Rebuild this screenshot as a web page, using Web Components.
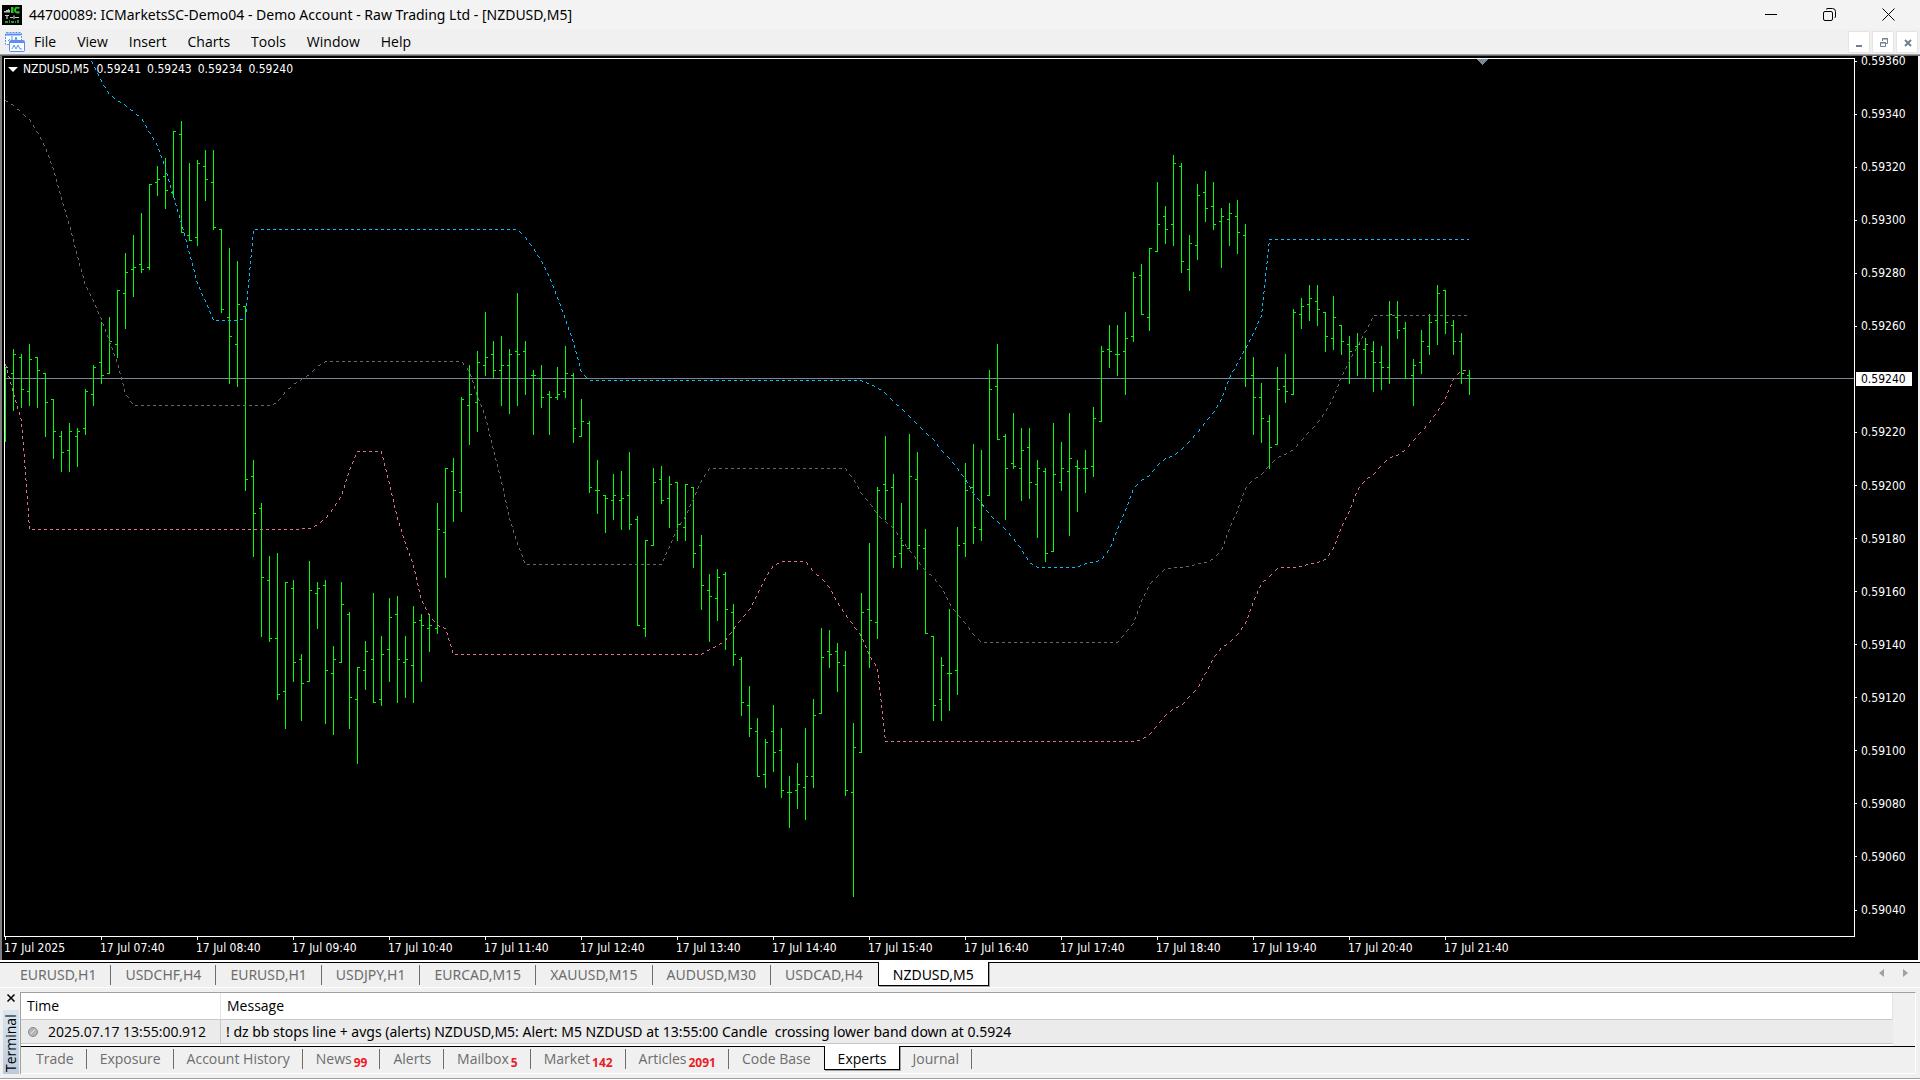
<!DOCTYPE html>
<html lang="en">
<head>
<meta charset="utf-8">
<title>Trading terminal</title>
<style>
  html, body { margin: 0; height: 100%; }
  body { background: #f0f0f0; font: 14px/20px "Open Sans", "Noto Sans", sans-serif; color: #000; overflow: hidden; }
</style>
</head>
<body>
<trading-app></trading-app>
<script>
const define = (name, html, setup) => {
  const tpl = document.createElement('template');
  tpl.innerHTML = html;
  customElements.define(name, class extends HTMLElement {
    constructor() {
      super();
      this.attachShadow({ mode: 'open' }).append(tpl.content.cloneNode(true));
    }
    connectedCallback() { if (setup) setup(this.shadowRoot, this); }
  });
};

define('title-bar', `
<style>
  :host { display: flex; align-items: center; height: 29px; padding: 0 25px 0 2px; background: #f3f3f3; box-sizing: border-box; }
  .logo { width: 20px; height: 20px; margin-right: 7px; flex: none; }
  h1 { flex: 1; margin: 0; font: 14px/20px "Noto Sans", "Open Sans", sans-serif; white-space: pre; }
  nav { display: flex; gap: 46px; }
  button { all: unset; width: 13px; height: 13px; display: block; }
  button svg { display: block; }
</style>
<svg class="logo" viewBox="0 0 20 20" aria-hidden="true">
  <rect width="20" height="20" fill="#000"/>
  <path d="M2 7.500V6h2V5h2V4h1v1h1v2.500z" fill="#b9c4b9"/>
  <path d="M9 2h2.500v6H9z" fill="#27c427"/>
  <path d="M17.500 3.200c-3.200-1.400-4.500 0-4.500 1.900s1.500 3.100 4.500 1.900" fill="none" stroke="#27c427" stroke-width="2"/>
  <path d="M3 10.500h4M5 10.500v3.500M8 12.500h3M12 10.500v3.500M13 12.500h4" stroke="#c9cfc9" stroke-width="1.200"/>
  <path d="M3 16h3v2H3zM7 15h1v3H7zM9 16h3v2H9zM13 16h1v2h-1zM15 15h2v3h-2z" fill="#1f9d2a"/>
</svg>
<h1>44700089: ICMarketsSC-Demo04 - Demo Account - Raw Trading Ltd - [NZDUSD,M5]</h1>
<nav>
  <button aria-label="Minimize"><svg width="13" height="13"><path d="M1 6.500h12" stroke="#000"/></svg></button>
  <button aria-label="Restore"><svg width="13" height="13" fill="none" stroke="#000"><rect x=".5" y="3.500" width="9" height="9" rx="1.500"/><path d="M3 1.500C3.500.8 4 .5 5 .5h4.500a3 3 0 0 1 3 3V8c0 1-.3 1.500-1 2"/></svg></button>
  <button aria-label="Close"><svg width="13" height="13"><path d="M.5.5l12 12M12.500.5l-12 12" stroke="#000"/></svg></button>
</nav>`);

define('menu-bar', `
<style>
  :host { display: flex; align-items: center; height: 25px; padding: 0 2px 0 5px; background: #f0f0f0; box-sizing: border-box; }
  .icon { width: 20px; height: 20px; flex: none; margin-right: 9px; }
  menu { flex: 1; display: flex; gap: 21px; margin: 0; padding: 0; list-style: none; }
  button { all: unset; white-space: nowrap; }
  .mdi { display: flex; gap: 2px; }
  .mdi button { width: 20px; height: 20px; background: #fff; border: 1px solid #e4e4e4; border-radius: 1px; }
  .mdi svg { display: block; }
</style>
<svg class="icon" viewBox="0 0 20 20" aria-hidden="true" fill="#fff" stroke="#5b8def">
  <path d="M1.500.5h14a1 1 0 0 1 1 1v11h-16v-11a1 1 0 0 1 1-1z" stroke-dasharray="2 1"/>
  <path d="M1 2.500h15" stroke-width="2"/>
  <path d="M3 9l2-2M7 8V4M10 8l1-3 1 3" fill="none"/>
  <rect x="4.500" y="8.500" width="15" height="11" rx="1"/>
  <path d="M5 10h14" stroke-width="2"/>
  <path d="M7 17l2-4 2 4 2-4 2 4h2" fill="none"/>
</svg>
<menu>
  <li><button>File</button></li><li><button>View</button></li><li><button>Insert</button></li>
  <li><button>Charts</button></li><li><button>Tools</button></li><li><button>Window</button></li><li><button>Help</button></li>
</menu>
<div class="mdi">
  <button aria-label="Minimize chart"><svg width="20" height="20"><path d="M7 13h6v2H7z" fill="#708090"/></svg></button>
  <button aria-label="Restore chart"><svg width="20" height="20" fill="none" stroke="#708090"><path d="M9.500 9V6.500h5v5H13M9 7h6"/><path d="M7.500 10.500h5v4h-5zM7 11h6"/></svg></button>
  <button aria-label="Close chart"><svg width="20" height="20"><path d="M8 8l6 6M14 8l-6 6" stroke="#708090" stroke-width="2"/></svg></button>
</div>`);

/* Bars, eight pixels apart: [high, low, open, close] */
const BARS = [
[367,442,367,367],[349,411,373,354],[354,408,357,389],[344,406,391,359],[357,408,357,370],[373,437,373,402],[399,459,399,431],[431,472,436,452],
[423,472,450,431],[428,467,436,431],[389,435,428,391],[365,406,394,367],[322,384,362,375],[317,374,373,341],[290,358,344,290],[253,329,293,272],
[235,297,269,267],[213,273,264,269],[184,270,267,184],[166,196,182,179],[158,209,176,190],[131,198,192,131],[121,233,134,232],[163,241,235,240],
[160,246,237,163],[150,201,166,179],[150,230,182,227],[229,313,229,309],[248,384,317,336],[261,387,344,304],[306,491,306,479],[460,557,476,513],
[503,637,508,577],[556,642,580,638],[553,700,638,694],[582,729,691,582],[580,682,588,662],[654,721,659,683],[561,682,681,590],[582,629,593,588],
[580,724,585,670],[646,735,673,659],[582,663,662,604],[612,729,614,697],[667,764,699,667],[641,690,670,651],[593,703,659,702],[636,706,699,654],
[598,682,649,617],[596,703,614,659],[636,698,662,659],[606,703,665,622],[614,682,620,625],[614,652,628,625],[503,634,628,529],[468,578,532,468],
[458,522,471,490],[397,512,492,399],[365,445,405,394],[351,432,402,362],[312,376,365,357],[341,379,354,370],[336,406,370,365],[349,414,365,354],
[293,406,351,354],[341,395,351,378],[370,435,375,375],[365,408,378,397],[391,435,394,397],[367,400,397,394],[346,398,391,373],[373,443,375,428],
[399,437,436,421],[421,493,423,487],[460,514,490,490],[495,533,495,498],[474,520,500,495],[471,530,500,498],[452,530,495,524],[516,626,519,625],
[540,637,628,540],[468,546,545,482],[466,504,479,500],[476,528,498,484],[482,541,482,524],[484,541,527,484],[487,568,487,553],[535,610,545,585],
[574,642,590,596],[569,621,598,577],[572,650,574,609],[604,666,612,654],[657,716,659,702],[686,737,705,728],[718,777,731,776],[739,788,774,742],
[705,772,731,752],[728,798,750,790],[776,828,792,792],[763,809,790,784],[728,820,787,776],[699,788,776,715],[628,714,713,657],[630,668,651,654],
[643,692,651,662],[651,796,665,790],[723,897,792,747],[593,753,752,612],[543,668,609,620],[487,639,622,490],[436,520,484,490],[474,568,487,556],
[503,568,553,545],[434,549,548,476],[452,570,479,545],[529,634,548,633],[636,721,636,705],[657,721,699,665],[609,711,673,673],[527,695,670,545],
[463,557,543,490],[444,544,487,527],[450,541,529,505],[370,496,495,389],[344,440,386,439],[434,520,436,468],[413,469,463,466],[428,501,468,450],
[428,499,447,482],[460,538,484,468],[468,562,471,553],[423,552,551,474],[442,491,482,468],[413,536,471,458],[460,512,466,468],[450,493,468,468],
[407,477,466,418],[346,422,421,351],[325,368,349,351],[325,376,354,354],[312,395,351,338],[272,342,336,277],[264,315,275,314],[248,331,317,248],
[182,252,251,224],[206,244,216,229],[155,246,224,163],[163,273,166,261],[235,291,269,243],[184,260,245,195],[171,222,192,208],[182,230,206,224],
[208,268,221,216],[203,246,219,213],[200,254,216,232],[224,387,235,378],[357,435,375,397],[383,443,397,418],[415,469,421,447],[367,445,444,389],
[354,403,386,391],[309,395,394,312],[298,329,314,306],[285,321,304,298],[285,326,301,309],[312,352,312,336],[296,350,338,317],[325,355,325,341],
[336,384,344,351],[333,376,346,344],[338,379,349,344],[341,392,351,362],[346,390,362,367],[301,384,367,314],[301,339,317,330],[322,379,328,378],
[359,406,375,365],[330,374,362,341],[314,355,346,322],[285,345,320,293],[290,334,290,322],[320,355,325,341],[333,384,341,373],[370,395,375,378]];

/* Band lines as x y pairs, drawn with a 3 on / 3 off dotted pen */
const BANDS = [
['#696969', '5 100 13 105 21 112 29 119 37 132 45 147 53 169 61 198 69 225 77 256 85 285 93 301 101 319 109 341 117 363 125 393 133 405 269 405 277 402 285 391 293 384 301 379 309 374 317 366 325 361 461 361 469 371 477 396 485 416 493 450 501 481 509 518 517 543 525 564 661 564 669 546 677 528 685 516 693 498 701 480 709 468 845 468 853 479 861 493 869 502 877 514 885 521 893 528 901 539 909 550 917 560 925 570 933 577 941 587 949 603 957 614 965 623 973 634 981 642 1117 642 1125 632 1133 623 1141 601 1149 584 1157 576 1165 568 1181 567 1189 566 1197 563 1207 562 1213 558 1221 550 1229 528 1237 510 1245 488 1253 479 1261 474 1269 465 1277 457 1285 454 1293 449 1301 440 1309 431 1319 420 1325 411 1333 397 1341 376 1349 360 1357 346 1365 331 1373 315 1469 315'],
['#db7093', '5 364 13 393 21 420 25 473 29 529 293 529 309 528 317 524 325 518 333 508 341 495 349 470 357 451 381 451 389 484 397 518 405 543 413 565 421 600 429 615 437 625 445 628 453 654 701 654 709 649 717 645 725 640 733 629 741 618 749 609 757 593 765 577 773 565 781 561 805 561 813 571 821 578 829 587 837 602 845 614 853 625 861 636 869 655 877 668 885 741 1133 741 1141 739 1149 734 1157 725 1165 715 1173 708 1181 705 1189 696 1197 688 1205 673 1213 658 1221 647 1229 642 1237 634 1245 623 1253 601 1261 583 1269 576 1277 568 1281 567 1293 567 1301 566 1309 563 1317 562 1325 559 1333 548 1341 526 1349 510 1357 490 1365 479 1373 474 1381 465 1389 457 1397 455 1405 449 1413 440 1421 431 1429 422 1437 411 1445 398 1453 378 1461 370 1469 370'],
['#00bfff', '91 61 93 64 101 81 109 94 117 100 125 105 133 111 141 118 149 132 157 145 165 168 173 196 181 223 189 253 197 283 205 301 213 320 237 320 245 318 253 229 517 229 525 237 533 248 541 261 549 277 557 297 565 319 573 342 581 372 589 380 861 380 865 382 877 387 885 393 893 401 901 408 909 416 917 424 925 432 933 439 941 450 949 458 957 468 965 479 973 493 981 503 989 514 997 521 1005 529 1013 538 1021 549 1029 562 1037 567 1073 567 1078 566 1086 563 1093 562 1101 559 1109 549 1117 529 1125 510 1133 488 1141 480 1149 475 1157 465 1165 458 1173 455 1181 449 1189 441 1197 432 1205 422 1213 412 1221 399 1229 377 1237 363 1245 348 1253 333 1261 315 1269 239 1469 239']];

/* Pixel-stepped dotted polyline */
const dotted = list => {
  const v = list.split(' ').map(Number);
  let d = '', n = 0;
  for (let i = 2; i < v.length; i += 2) {
    const dx = v[i] - v[i - 2], dy = v[i + 1] - v[i - 1];
    const steps = Math.max(Math.abs(dx), Math.abs(dy));
    for (let s = 0; s < steps; s++, n++) {
      if (n % 6 < 3) d += `M${Math.round(v[i - 2] + dx * s / steps)} ${Math.round(v[i - 1] + dy * s / steps)}h1v1h-1z`;
    }
  }
  return d;
};

define('price-chart', `
<style>
  :host { display: grid; grid-template: minmax(0, 1fr) 23px / minmax(0, 1fr) 63px; padding: 0 0 0 2px; background: #000; color: #fff;
    font: 12px/12px "DejaVu Sans Condensed", "DejaVu Sans", sans-serif; border-left: 2px solid #808080; border-right: 2px solid #f0f0f0; box-sizing: border-box; }
  .plot { position: relative; margin-top: 2px; border: 1px solid #fff; overflow: hidden; }
  .plot svg { display: block; width: 100%; height: 100%; }
  .caption { position: absolute; left: 3px; top: 4px; display: flex; align-items: center; gap: 5px; }
  .caption i { border: solid transparent; border-width: 5px 5px 0; border-top-color: #fff; }
  .caption div { display: flex; gap: 6px; }
  .caption b { font-weight: 400; margin-right: 1px; }
  .prices { display: flex; flex-direction: column; justify-content: space-between; padding-bottom: 22px; line-height: 10px; }
  .prices span { display: flex; align-items: center; gap: 4px; }
  .prices span::before { content: ""; width: 2px; height: 1px; background: #fff; }
  .prices .now::before { content: none; }
  .prices b { font-weight: 400; background: #fff; color: #000; line-height: 14px; margin: -2px 0 -2px 1px; padding: 0 6px 0 5px; }
  .times { display: flex; grid-column: 1 / -1; overflow: hidden; }
  .times span { flex: 0 0 96px; line-height: 20px; white-space: nowrap; }
  .times span::before { content: ""; display: block; width: 1px; height: 3px; margin: 0 0 -2px 1px; background: #fff; }
</style>
<div class="plot">
  <svg shape-rendering="crispEdges" role="img" aria-label="NZDUSD five minute bar chart"><g transform="translate(-5 -59)">
    <path d="M0 378h4000v1H0z" fill="#778899"/>
    <path d="M1477 59h11l-5.500 6z" fill="#778899"/>
  </g></svg>
  <div class="caption"><i></i><div><b>NZDUSD,M5</b><span>0.59241</span><span>0.59243</span><span>0.59234</span><span>0.59240</span></div></div>
</div>
<div class="prices"></div>
<div class="times"></div>`, root => {
  const g = root.querySelector('g');
  const add = (d, fill) => {
    const p = document.createElementNS('http://www.w3.org/2000/svg', 'path');
    p.setAttribute('d', d); p.setAttribute('fill', fill); g.append(p);
  };
  add(BARS.map(([h, l, o, c], i) => {
    const x = 5 + 8 * i;
    return `M${x} ${h}h1V${l}h-1zM${x - 2} ${o}h2v1h-2zM${x + 1} ${c}h2v1h-2z`;
  }).join(''), '#00ff00');
  BANDS.forEach(([color, list]) => add(dotted(list), color));
  for (let p = 59360; p >= 59040; p -= 20)
    root.querySelector('.prices').insertAdjacentHTML('beforeend', p === 59240 ? `<span class="now"><b>0.${p}</b></span>` : `<span>0.${p}</span>`);
  const times = ['17 Jul 2025'];
  for (let h = 7; h <= 21; h++) times.push(`17 Jul ${String(h).padStart(2, '0')}:40`);
  root.querySelector('.times').innerHTML = times.map(t => `<span>${t}</span>`).join('');
});

define('tab-strip', `
<style>
  :host { display: flex; height: 27px; border-top: 1px solid #000; border-bottom: 1px solid #fff; background: #f0f0f0; box-sizing: border-box; }
  ::slotted([slot=end]) { margin-left: auto; }
</style>
<slot></slot><slot name="end"></slot>`);

define('tab-item', `
<style>
  :host { display: block; height: 24px; }
  button { all: unset; box-sizing: border-box; display: flex; height: 20px; margin-top: 2px; padding: 0 var(--tab-end, 12px) 0 var(--tab-start, 13px); border-right: 1px solid #6d6d6d; color: #6d6d6d; line-height: 19px; white-space: nowrap; }
  :host([before]) button { border-right-color: transparent; }
  :host([selected]) button { margin-top: -1px; height: 24px; padding-top: 3px; border: 1px solid #000; border-top: 0; background: #fff; color: #000; box-shadow: 1px 1px #a0a0a0; }
  ::slotted(b) { color: #ed1c24; font-size: 12px; line-height: 28px; margin-left: 2px; }
</style>
<button role="tab"><slot></slot></button>`);

define('log-table', `
<style>
  :host { display: flex; flex: 1; min-height: 0; background: #f0f0f0; }
  table { flex: 1; border-collapse: separate; border-spacing: 0; table-layout: fixed; background: #fff; margin-bottom: 2px; box-shadow: 0 2px #fff; }
  th { height: 26px; text-align: left; font-weight: 400; padding: 0 6px; border-bottom: 1px solid #c8c8c8; border-right: 1px solid #e3e3e3; }
  td { height: 23px; padding: 0 5px; background: #ebebeb; border-bottom: 1px solid #c8c8c8; white-space: pre; line-height: 20px; }
  th:first-child { width: 187px; }
  td:first-child { border-right: 1px solid #c8c8c8; }
  td:last-child { font-family: "Noto Sans", "Open Sans", sans-serif; }
  .cell { display: flex; align-items: center; gap: 10px; padding-left: 2px; }
  .track { width: 22px; }
</style>
<table>
  <thead><tr><th>Time</th><th>Message</th></tr></thead>
  <tbody><tr><td><div class="cell"><svg width="10" height="10" aria-hidden="true"><circle cx="5" cy="5" r="4.500" fill="#b4b4b4" stroke="#8a8a8a"/><path d="M2.500 7l4.500-4.500" stroke="#f2f2f2"/></svg>2025.07.17 13:55:00.912</div></td><td>! dz bb stops line + avgs (alerts) NZDUSD,M5: Alert: M5 NZDUSD at 13:55:00 Candle  crossing lower band down at 0.5924</td></tr></tbody>
</table>
<div class="track"></div>`);

define('terminal-panel', `
<style>
  :host { display: flex; height: 82px; box-sizing: border-box; padding-right: 4px; }
  aside { width: 20px; display: flex; flex-direction: column; align-items: center; flex: none; padding-left: 2px; box-sizing: border-box; }
  .close { all: unset; height: 12px; margin-bottom: 6px; display: flex; align-items: center; }
  .name { flex: 1; width: 16px; writing-mode: vertical-rl; transform: rotate(180deg); line-height: 16px; text-align: left; padding-top: 2px; box-sizing: border-box; background: linear-gradient(#bccadc, #d9e6f2); }
  .body { flex: 1; min-width: 0; display: flex; flex-direction: column; border: 1px solid #a0a0a0; border-right-color: #fff; border-bottom: 0; }
</style>
<aside>
  <button class="close" aria-label="Close terminal"><svg width="8" height="8"><path d="M.5.5l7 7M7.500.5l-7 7" stroke="#000" stroke-width="1.500"/></svg></button>
  <div class="name">Terminal</div>
</aside>
<div class="body"><slot></slot></div>`);

define('trading-app', `
<style>
  :host { display: flex; flex-direction: column; height: 100vh; }
  .edge { height: 2px; background: linear-gradient(#a0a0a0 50%, #696969 50%); flex: none; }
  .gap { height: 2px; background: #fff; flex: none; }
  title-bar, menu-bar, tab-strip, terminal-panel { flex: none; }
  price-chart { flex: 1; min-height: 0; }
  .charts { padding-left: 6px; height: 26px; font-family: "Noto Sans", "Open Sans", sans-serif; --tab-start: 14px; --tab-end: 14px; }
  .pager { display: flex; gap: 19px; padding: 6px 12px 0 0; }
  .pager button { all: unset; height: 8px; }
  .pager svg { display: block; }
  terminal-panel { margin-top: 4px; }
  .views { padding-left: 2px; height: 28px; }
  .status { height: 6px; box-sizing: border-box; border-bottom: 1px solid #fff; box-shadow: inset 0 -1px #a0a0a0; flex: none; }
</style>
<title-bar></title-bar>
<menu-bar></menu-bar>
<div class="edge"></div>
<price-chart></price-chart>
<div class="gap"></div>
<tab-strip class="charts" role="tablist">
  <tab-item>EURUSD,H1</tab-item><tab-item>USDCHF,H4</tab-item><tab-item>EURUSD,H1</tab-item><tab-item>USDJPY,H1</tab-item>
  <tab-item>EURCAD,M15</tab-item><tab-item>XAUUSD,M15</tab-item><tab-item>AUDUSD,M30</tab-item><tab-item before>USDCAD,H4</tab-item>
  <tab-item selected>NZDUSD,M5</tab-item>
  <div class="pager" slot="end">
    <button aria-label="Scroll left"><svg width="5" height="8"><path d="M5 0v8L0 4z" fill="#a0a0a0"/></svg></button>
    <button aria-label="Scroll right"><svg width="5" height="8"><path d="M0 0v8l5-4z" fill="#a0a0a0"/></svg></button>
  </div>
</tab-strip>
<terminal-panel>
  <log-table></log-table>
  <tab-strip class="views" role="tablist">
    <tab-item>Trade</tab-item><tab-item>Exposure</tab-item><tab-item>Account History</tab-item><tab-item>News<b>99</b></tab-item>
    <tab-item>Alerts</tab-item><tab-item>Mailbox<b>5</b></tab-item><tab-item>Market<b>142</b></tab-item><tab-item>Articles<b>2091</b></tab-item>
    <tab-item before>Code Base</tab-item><tab-item selected>Experts</tab-item><tab-item>Journal</tab-item>
  </tab-strip>
</terminal-panel>
<div class="status"></div>`);
</script>
</body>
</html>
